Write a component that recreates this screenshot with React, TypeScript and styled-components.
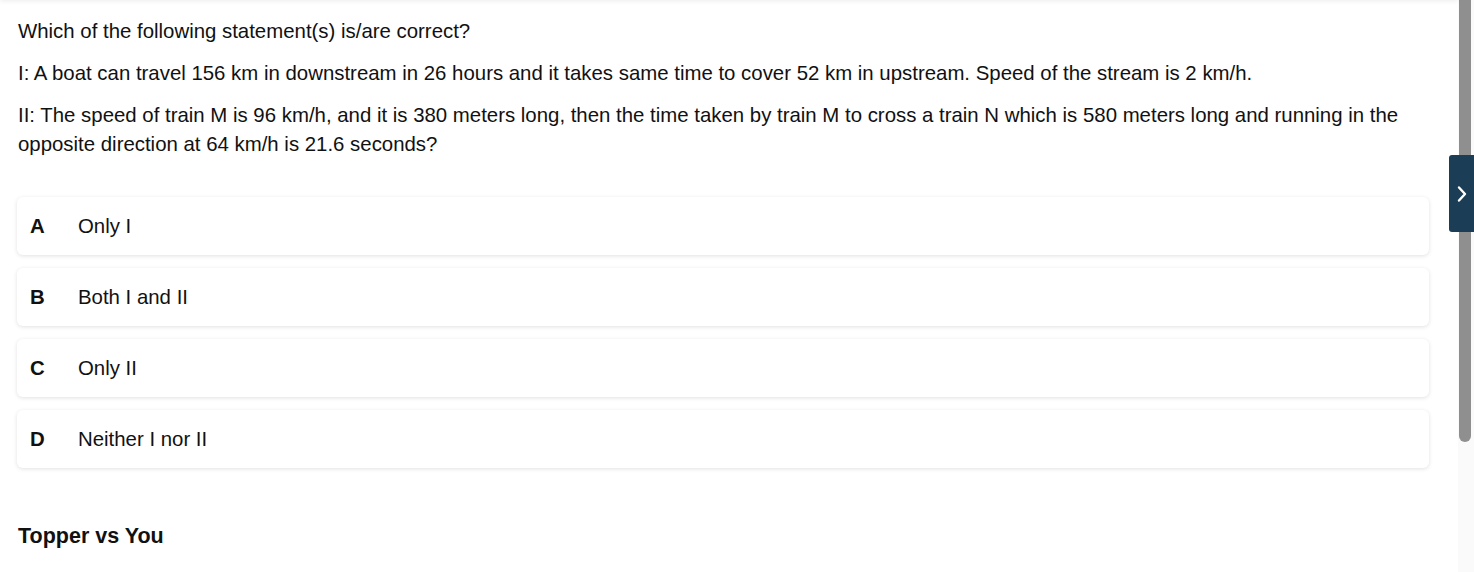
import React from 'react';
import styled, { createGlobalStyle } from 'styled-components';

const GlobalStyle = createGlobalStyle`
  html, body {
    margin: 0;
    padding: 0;
    background: #fff;
    font-family: 'Liberation Sans', Arial, sans-serif;
    color: #111;
    overflow: hidden;
  }
`;

const options = [
  { key: 'A', text: 'Only I' },
  { key: 'B', text: 'Both I and II' },
  { key: 'C', text: 'Only II' },
  { key: 'D', text: 'Neither I nor II' },
];

const App = () => {
  return (
    <>
      <GlobalStyle />
      <Page>
        <Main>
          <TopShade />
          <Question>
            <Para>Which of the following statement(s) is/are correct?</Para>
            <Para>
              I: A boat can travel 156 km in downstream in 26 hours and it takes same time to cover 52 km in
              upstream. Speed of the stream is 2 km/h.
            </Para>
            <Para>
              II: The speed of train M is 96 km/h, and it is 380 meters long, then the time taken by train M to
              cross a train N which is 580 meters long and running in the opposite direction at 64 km/h is 21.6
              seconds?
            </Para>
          </Question>
          <Options>
            {options.map((o) => (
              <OptionCard key={o.key}>
                <OptionKey>{o.key}</OptionKey>
                <OptionText>{o.text}</OptionText>
              </OptionCard>
            ))}
          </Options>
          <SectionTitle>Topper vs You</SectionTitle>
        </Main>
        <ScrollTrack>
          <ScrollThumb />
        </ScrollTrack>
        <SideTab>
          <svg width="14" height="20" viewBox="0 0 14 20" fill="none">
            <path d="M4 3.5 L10 10 L4 16.5" stroke="#fff" strokeWidth="2.4" strokeLinecap="round" strokeLinejoin="round" />
          </svg>
        </SideTab>
      </Page>
    </>
  );
};

const Page = styled.div`
  position: relative;
  display: flex;
  width: 1474px;
  height: 572px;
  overflow: hidden;
`;

const Main = styled.div`
  position: relative;
  flex: 1;
  padding: 17px 29px 0 17px;
`;

const TopShade = styled.div`
  position: absolute;
  top: -6px;
  left: 0;
  right: 0;
  height: 6px;
  box-shadow: 0 1px 5px rgba(0, 0, 0, 0.08);
`;

const Question = styled.div`
  padding-left: 1px;
  font-size: 20.4px;
  line-height: 29px;
  color: #111;
`;

const Para = styled.p`
  margin: 0 0 13px;
`;

const Options = styled.div`
  display: flex;
  flex-direction: column;
  gap: 13px;
  margin-top: 38px;
`;

const OptionCard = styled.div`
  display: flex;
  align-items: center;
  height: 58px;
  padding: 0 13px;
  background: #fff;
  border-radius: 6px;
  box-shadow: 0 1px 4px rgba(0, 0, 0, 0.12);
`;

const OptionKey = styled.span`
  width: 48px;
  font-size: 20.4px;
  font-weight: 700;
  color: #111;
`;

const OptionText = styled.span`
  font-size: 20.4px;
  color: #111;
`;

const SectionTitle = styled.h3`
  margin: 56px 0 0 1px;
  font-size: 21.5px;
  font-weight: 700;
  color: #111;
`;

const ScrollTrack = styled.div`
  width: 16px;
  background: #fafafa;
  padding: 0 3px 0 1px;
  box-sizing: border-box;
`;

const ScrollThumb = styled.div`
  width: 12px;
  height: 442px;
  background: #8f8f8f;
  border-radius: 0 0 6px 6px;
`;

const SideTab = styled.div`
  position: absolute;
  top: 155px;
  right: 0;
  width: 25px;
  height: 77px;
  background: #1b3d56;
  border-radius: 3px 0 0 3px;
  display: flex;
  align-items: center;
  justify-content: center;
`;

export default App;
